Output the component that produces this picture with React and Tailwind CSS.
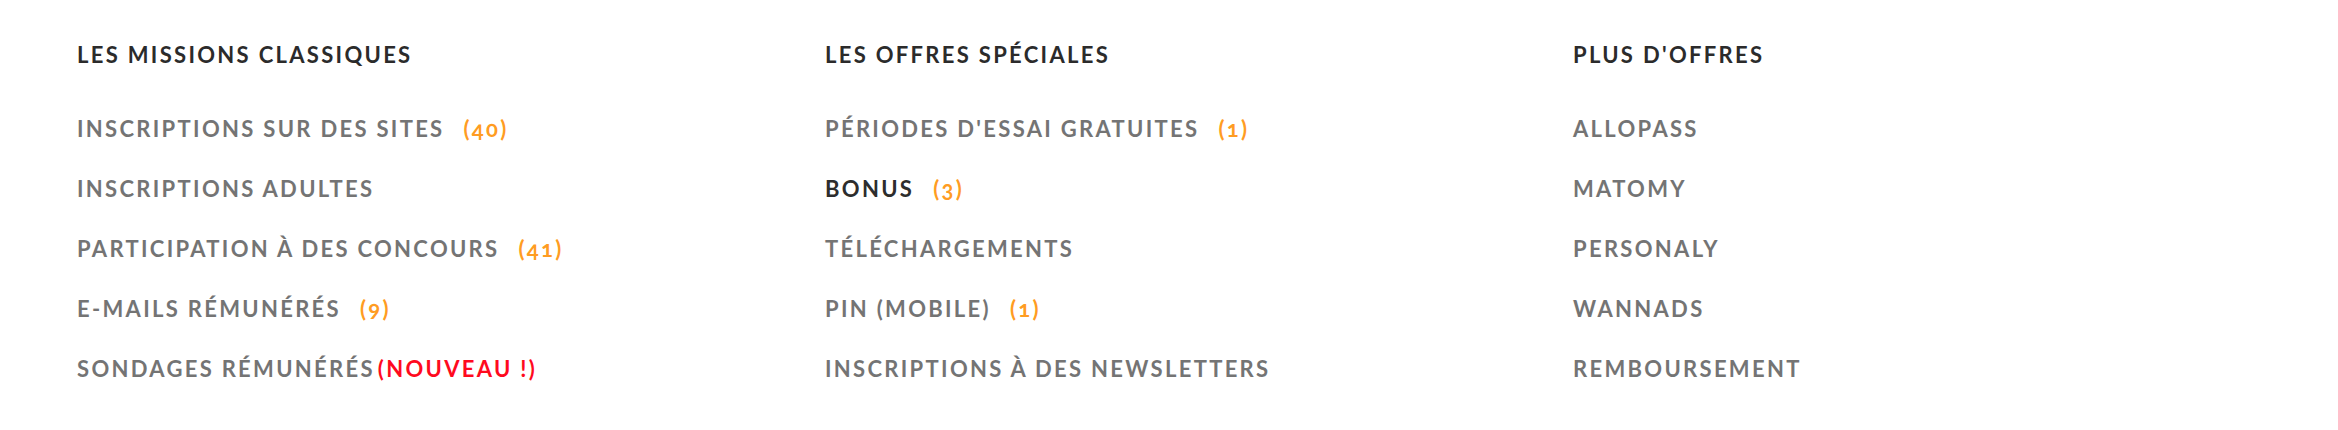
import React from "react";

const COLUMNS = [
  {
    title: "Les missions classiques",
    items: [
      { label: "Inscriptions sur des sites", count: 40 },
      { label: "Inscriptions adultes" },
      { label: "Participation à des concours", count: 41 },
      { label: "E-mails rémunérés", count: 9 },
      { label: "Sondages rémunérés", isNew: true },
    ],
  },
  {
    title: "Les offres spéciales",
    items: [
      { label: "Périodes d'essai gratuites", count: 1 },
      { label: "Bonus", count: 3, active: true },
      { label: "Téléchargements" },
      { label: "PIN (mobile)", count: 1 },
      { label: "Inscriptions à des newsletters" },
    ],
  },
  {
    title: "Plus d'offres",
    items: [
      { label: "Allopass" },
      { label: "Matomy" },
      { label: "Personaly" },
      { label: "Wannads" },
      { label: "Remboursement" },
    ],
  },
];

function MenuItem({ item }) {
  return (
    <li className="h-[60px] leading-[60px] whitespace-nowrap">
      <a
        href="#"
        className={item.active ? "text-[#2d2d2d]" : "text-[#747474]"}
      >
        {item.label}
      </a>
      {item.count != null && (
        <span className="ml-[19px] text-[#ff9c22] oldstyle-nums">({item.count})</span>
      )}
      {item.isNew && <span className="ml-[3px] text-[#ff0a1e]">(Nouveau !)</span>}
    </li>
  );
}

export default function App() {
  return (
    <div
      className="w-[2338px] h-[430px] bg-white pl-[77px] pt-[40px]"
      style={{ fontFamily: "Lato, 'Open Sans', sans-serif" }}
    >
      <div className="grid grid-cols-[748px_748px_1fr]">
        {COLUMNS.map((col) => (
          <div key={col.title}>
            <h3 className="h-[30px] leading-[30px] text-[22px] font-bold uppercase tracking-[0.105em] text-[#2b2b2b]">
              {col.title}
            </h3>
            <ul className="mt-[29px] text-[22px] font-bold uppercase tracking-[0.105em]">
              {col.items.map((item) => (
                <MenuItem key={item.label} item={item} />
              ))}
            </ul>
          </div>
        ))}
      </div>
    </div>
  );
}
